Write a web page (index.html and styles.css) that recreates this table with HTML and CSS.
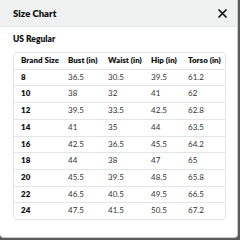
FILE: index.html
```html
<!DOCTYPE html>
<html>
<head>
<meta charset="utf-8">
<link rel="stylesheet" href="styles.css">
</head>
<body>
<div class="modal">
  <div class="header">
    <span class="title">Size Chart</span>
    <span class="close">
      <svg width="9" height="9" viewBox="0 0 9 9"><path d="M1 1L8 8M8 1L1 8" stroke="#111" stroke-width="1.7" stroke-linecap="round"/></svg>
    </span>
  </div>
  <div class="content">
    <div class="subtitle">US Regular</div>
    <div class="table-wrap">
      <table class="chart">
        <colgroup>
          <col class="c1"><col class="c2"><col class="c3"><col class="c4"><col class="c5">
        </colgroup>
        <thead>
          <tr><th>Brand Size</th><th>Bust (in)</th><th>Waist (in)</th><th>Hip (in)</th><th>Torso (in)</th></tr>
        </thead>
        <tbody>
          <tr><td class="size">8</td><td>36.5</td><td>30.5</td><td>39.5</td><td>61.2</td></tr>
          <tr><td class="size">10</td><td>38</td><td>32</td><td>41</td><td>62</td></tr>
          <tr><td class="size">12</td><td>39.5</td><td>33.5</td><td>42.5</td><td>62.8</td></tr>
          <tr><td class="size">14</td><td>41</td><td>35</td><td>44</td><td>63.5</td></tr>
          <tr><td class="size">16</td><td>42.5</td><td>36.5</td><td>45.5</td><td>64.2</td></tr>
          <tr><td class="size">18</td><td>44</td><td>38</td><td>47</td><td>65</td></tr>
          <tr><td class="size">20</td><td>45.5</td><td>39.5</td><td>48.5</td><td>65.8</td></tr>
          <tr><td class="size">22</td><td>46.5</td><td>40.5</td><td>49.5</td><td>66.5</td></tr>
          <tr><td class="size">24</td><td>47.5</td><td>41.5</td><td>50.5</td><td>67.2</td></tr>
        </tbody>
      </table>
    </div>
  </div>
</div>
</body>
</html>
```

FILE: styles.css
```css
html, body {
  margin: 0;
  padding: 0;
  width: 240px;
  height: 240px;
  overflow: hidden;
  background: #5a5a5a;
}
.modal {
  width: 238px;
  height: 238px;
  box-sizing: border-box;
  background: #fff;
  border-right: 1px solid #c9cccc;
  border-bottom: 1px solid #c9cccc;
  border-radius: 0 0 4px 4px;
  overflow: hidden;
  font-family: Lato, "Liberation Sans", sans-serif;
  color: #0f1111;
}
.header {
  height: 27px;
  box-sizing: border-box;
  background: #f0f2f2;
  border-bottom: 1px solid #e3e6e6;
  display: flex;
  align-items: center;
  justify-content: space-between;
  padding: 0 10px 0 13px;
}
.title {
  font-weight: 800;
  font-size: 9.5px;
}
.close {
  display: flex;
  align-items: center;
}
.content {
  padding: 7px 12px 0 13px;
}
.subtitle {
  font-weight: 800;
  font-size: 8.5px;
  line-height: 11px;
}
.table-wrap {
  margin-top: 7px;
  border: 1px solid #e3e6e6;
  border-radius: 4px;
  overflow: hidden;
  width: 213px;
  box-sizing: border-box;
}
.chart {
  width: 100%;
  border-collapse: collapse;
  table-layout: fixed;
  font-size: 8px;
}
.c1 { width: 47px; }
.c2 { width: 40px; }
.c3 { width: 43px; }
.c4 { width: 37px; }
.chart th, .chart td {
  height: 15.7px;
  padding: 0 0 0 7px;
  text-align: left;
  white-space: nowrap;
  line-height: 15.7px;
}
.chart th {
  font-weight: 800;
}
.chart td {
  color: #333;
}
.chart td.size {
  font-weight: 800;
  color: #0f1111;
}
.chart tbody tr {
  border-top: 1px solid #e3e6e6;
}
```
